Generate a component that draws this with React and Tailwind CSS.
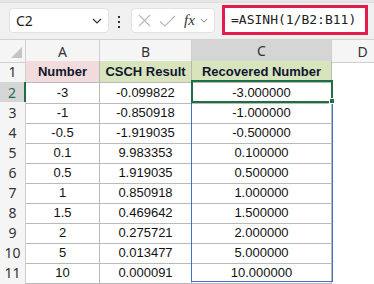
import React from "react";

const rows = [
  ["-3", "-0.099822", "-3.000000"],
  ["-1", "-0.850918", "-1.000000"],
  ["-0.5", "-1.919035", "-0.500000"],
  ["0.1", "9.983353", "0.100000"],
  ["0.5", "1.919035", "0.500000"],
  ["1", "0.850918", "1.000000"],
  ["1.5", "0.469642", "1.500000"],
  ["2", "0.275721", "2.000000"],
  ["5", "0.013477", "5.000000"],
  ["10", "0.000091", "10.000000"],
];

const grid = "grid grid-cols-[26px_74px_92px_140px_62px]";
const rowHead =
  "flex items-center justify-center bg-[#f5f5f5] border-r border-b border-[#cfcfcf] text-[14px] text-[#333] font-['Noto_Sans',sans-serif]";
const cell =
  "flex items-center justify-center border-r border-b border-[#b9b9b9] text-[13px] text-[#111]";

const Chevron = ({ className }) => (
  <svg viewBox="0 0 10 6" className={className} fill="none" stroke="currentColor" strokeWidth="1.2">
    <path d="M1 1l4 4 4-4" />
  </svg>
);

const App = () => {
  return (
    <div className="w-[374px] h-[284px] overflow-hidden bg-white font-['Liberation_Sans',sans-serif]">
      {/* formula bar */}
      <div className="h-[40px] bg-[#f0f0f0] border-b border-[#d2d2d2] flex flex-col">
        <div className="h-[3px] bg-[#e6e6e6] border-b border-[#dcdcdc]" />
        <div className="flex items-start">
          <div className="ml-[9px] mt-[5px] w-[100px] h-[25px] bg-white rounded-[4px] border border-[#e2e2e2] flex items-center pl-[6px] pr-[6px]">
            <span className="text-[14px] text-[#222] font-['Noto_Sans',sans-serif] flex-1">C2</span>
            <Chevron className="w-[10px] h-[6px] text-[#333]" />
          </div>
          <div className="ml-[9px] mt-[13px] flex flex-col gap-[3px]">
            <div className="w-[2px] h-[2px] bg-[#333]" />
            <div className="w-[2px] h-[2px] bg-[#333]" />
            <div className="w-[2px] h-[2px] bg-[#333]" />
          </div>
          <div className="ml-[11px] mt-[5px] w-[84px] h-[25px] bg-white rounded-[4px] border border-[#e2e2e2] flex items-center pl-[6px]">
            <svg viewBox="0 0 13 13" className="w-[13px] h-[13px]" fill="none" stroke="#b8b8b8" strokeWidth="1.1">
              <path d="M1 1l11 11M12 1L1 12" />
            </svg>
            <svg viewBox="0 0 17 12" className="ml-[8px] w-[17px] h-[12px]" fill="none" stroke="#b8b8b8" strokeWidth="1.1">
              <path d="M1 6.5l5 4.5L16 1" />
            </svg>
            <span className="ml-[8px] text-[15px] italic text-[#333] font-['Liberation_Serif',serif] leading-none">fx</span>
            <Chevron className="ml-[5px] w-[8px] h-[5px] text-[#777]" />
          </div>
          <div className="ml-[7px] mt-[2px] w-[146px] h-[30px] bg-white border-[3px] border-[#e21d4b] flex items-center pl-[6px]">
            <span className="text-[13px] text-[#222] font-['DejaVu_Sans_Mono',monospace] whitespace-nowrap">=ASINH(1/B2:B11)</span>
          </div>
        </div>
      </div>

      {/* sheet */}
      <div className="relative">
        {/* column headers */}
        <div className={`${grid} h-[21px]`}>
          <div className="relative bg-[#f5f5f5] border-r border-b border-[#cfcfcf]">
            <svg viewBox="0 0 11 11" className="absolute right-[3px] bottom-[4px] w-[11px] h-[11px]">
              <path d="M11 0V11H0Z" fill="#c4c4c4" />
            </svg>
          </div>
          <div className={rowHead}>A</div>
          <div className={rowHead}>B</div>
          <div className="flex items-center justify-center bg-[#d5d5d5] border-r border-[#cfcfcf] border-b-2 border-b-[#1e6f43] text-[14px] text-[#333] font-['Noto_Sans',sans-serif]">
            C
          </div>
          <div className={rowHead}>D</div>
        </div>

        {/* row 1 */}
        <div className={`${grid} h-[21px]`}>
          <div className={rowHead}>1</div>
          <div className={`${cell} bg-[#f2dcdb] font-bold text-[#10162f]`}>Number</div>
          <div className={`${cell} bg-[#d8e4bc] font-bold text-[#10162f]`}>CSCH Result</div>
          <div className={`${cell} bg-[#d8e4bc] font-bold text-[#10162f]`}>Recovered Number</div>
          <div />
        </div>

        {rows.map((r, i) => (
          <div key={i} className={`${grid} h-[20px]`}>
            {i === 0 ? (
              <div className="flex items-center justify-center bg-[#d5d5d5] border-b border-[#cfcfcf] border-r-2 border-r-[#1e6f43] text-[14px] text-[#1e6f43] font-['Noto_Sans',sans-serif]">
                2
              </div>
            ) : (
              <div className={rowHead}>{i + 2}</div>
            )}
            <div className={cell}>{r[0]}</div>
            <div className={cell}>{r[1]}</div>
            <div className={cell}>{r[2]}</div>
            <div />
          </div>
        ))}

        <div className={`${grid} h-[20px]`}>
          <div className="bg-[#f5f5f5] border-r border-[#cfcfcf]" />
        </div>

        {/* selected range C2:C11 */}
        <div className="absolute left-[191px] top-[41px] w-[142px] h-[201px] border border-[#3f6fc6] pointer-events-none" />
        {/* active cell C2 */}
        <div className="absolute left-[191px] top-[40px] w-[142px] h-[23px] border-2 border-[#1e6f43] pointer-events-none" />
        <div className="absolute left-[329px] top-[58px] w-[6px] h-[6px] bg-[#1e6f43] border border-white pointer-events-none" />
      </div>
    </div>
  );
};

export default App;
